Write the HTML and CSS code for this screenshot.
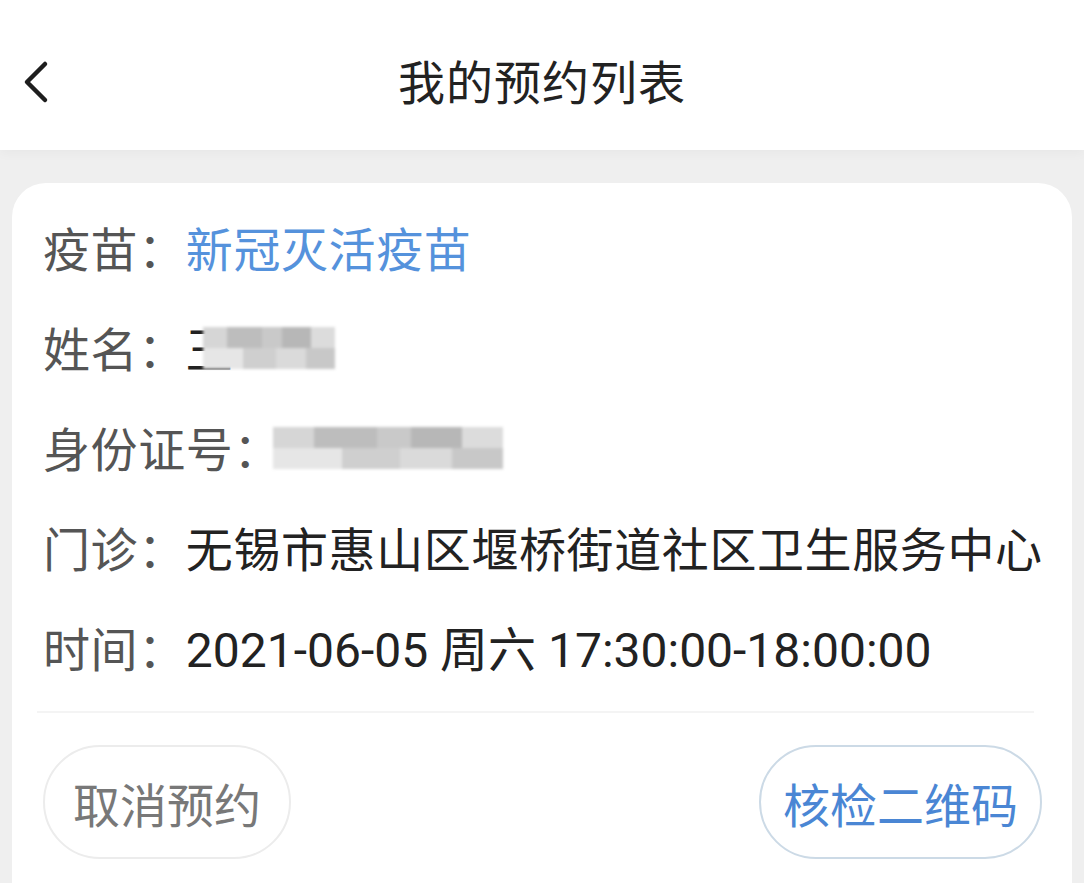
FILE: index.html
```html
<!DOCTYPE html>
<html>
<head>
    <title>我的预约列表</title>
    <link rel="stylesheet" href="styles.css">
</head>
<body>
    <div class="page">
        <div class="nav-bar">
            <span class="back">
                <svg width="34" height="44" viewBox="0 0 34 44"><path d="M27 4 L9 22 L27 40" fill="none" stroke="#1e1e1e" stroke-width="4.5" stroke-linecap="round" stroke-linejoin="round"/></svg>
            </span>
            <h1>我的预约列表</h1>
        </div>

        <div class="list">
            <div class="card">
                <div class="row"><span class="label">疫苗：</span><span class="value blue">新冠灭活疫苗</span></div>
                <div class="row"><span class="label">姓名：</span><span class="value">王</span><span class="mosaic name-mask"></span></div>
                <div class="row"><span class="label">身份证号：</span><span class="mosaic id-mask"></span></div>
                <div class="row"><span class="label">门诊：</span><span class="value">无锡市惠山区堰桥街道社区卫生服务中心</span></div>
                <div class="row"><span class="label">时间：</span><span class="value time">2021-06-05 周六 17:30:00-18:00:00</span></div>
                <div class="divider"></div>
                <div class="actions">
                    <button class="btn-cancel">取消预约</button>
                    <button class="btn-code">核检二维码</button>
                </div>
            </div>
        </div>
    </div>
</body>
</html>
```

FILE: styles.css
```css
body {
    margin: 0;
    background: #efefef;
    font-family: "Noto Sans CJK SC", "Noto Sans", sans-serif;
    overflow: hidden;
}
.page {
    width: 1084px;
    height: 883px;
    overflow: hidden;
}
.nav-bar {
    height: 150px;
    background: #fff;
    display: flex;
    align-items: center;
    justify-content: center;
    position: relative;
    box-shadow: 0 4px 10px rgba(0,0,0,0.03);
}
.back {
    position: absolute;
    left: 18px;
    top: 60px;
    display: flex;
}
h1 {
    margin: 8px 0 0;
    font-size: 47px;
    font-weight: 400;
    color: #222;
    letter-spacing: 1px;
}
.list {
    padding: 33px 12px 0;
}
.card {
    background: #fff;
    border-radius: 34px;
    padding: 13px 30px 30px 31px;
    height: 760px;
}
.row {
    height: 100px;
    display: flex;
    align-items: center;
    font-size: 47px;
    letter-spacing: 0.6px;
    white-space: nowrap;
}
.label {
    color: #555;
}
.value {
    color: #222;
}
.value.blue {
    color: #5592dc;
}
.time {
    font-family: "Roboto", "Noto Sans CJK SC", sans-serif;
    font-size: 48px;
    letter-spacing: 0;
}
.name-mask {
    width: 132px;
    margin-left: -30px;
}
.id-mask {
    width: 230px;
    margin-left: -8px;
}
.mosaic {
    height: 42px;
    margin-top: 4px;
    background:
        linear-gradient(90deg, #d6d6d6 0 18%, #bdbdbd 18% 45%, #c9c9c9 45% 60%, #b7b7b7 60% 82%, #dcdcdc 82% 100%) top / 100% 50% no-repeat,
        linear-gradient(90deg, #e6e6e6 0 30%, #cfcfcf 30% 55%, #dadada 55% 78%, #c8c8c8 78% 100%) bottom / 100% 50% no-repeat;
    filter: blur(1.5px);
}
.divider {
    height: 2px;
    background: #f4f4f4;
    margin: 15px 8px 0 -6px;
}
.actions {
    display: flex;
    justify-content: space-between;
    margin-top: 32px;
}
button {
    height: 114px;
    padding: 0 26px;
    border-radius: 57px;
    background: #fff;
    font-family: "Noto Sans CJK SC", sans-serif;
    font-size: 47px;
    cursor: pointer;
}
.btn-cancel {
    border: 2px solid #ececec;
    color: #787878;
    padding: 0 28px;
}
.btn-code {
    border: 2px solid #ccdae6;
    color: #4a86d4;
    padding: 0 22px;
}
```
